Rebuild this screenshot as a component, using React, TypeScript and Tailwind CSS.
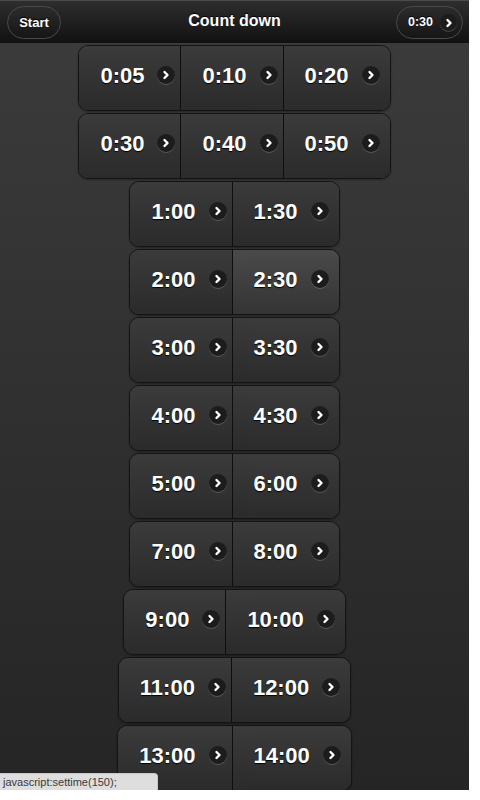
import React from "react";

const rows: string[][] = [
  ["0:05", "0:10", "0:20"],
  ["0:30", "0:40", "0:50"],
  ["1:00", "1:30"],
  ["2:00", "2:30"],
  ["3:00", "3:30"],
  ["4:00", "4:30"],
  ["5:00", "6:00"],
  ["7:00", "8:00"],
  ["9:00", "10:00"],
  ["11:00", "12:00"],
  ["13:00", "14:00"],
];

function Arrow({ size = 18 }: { size?: number }) {
  return (
    <span
      className="flex shrink-0 items-center justify-center rounded-full bg-[#1c1c1c] shadow-[0_1px_0_rgba(255,255,255,0.18)]"
      style={{ width: size, height: size }}
    >
      <svg width="10" height="10" viewBox="0 0 10 10">
        <polyline
          points="3.5,2 6.5,5 3.5,8"
          fill="none"
          stroke="#fff"
          strokeWidth="2.4"
          strokeLinecap="round"
          strokeLinejoin="round"
        />
      </svg>
    </span>
  );
}

export default function App() {
  return (
    <div className="relative h-[800px] w-[480px] overflow-hidden bg-white font-['Liberation_Sans',Arial,sans-serif]">
      <div className="flex h-[790px] w-[469px] flex-col overflow-hidden bg-gradient-to-b from-[#3c3c3c] to-[#252525]">
        {/* Header bar */}
        <div className="relative flex h-[43px] shrink-0 items-center justify-center border-t border-[#4a4a4a] border-b border-b-[#111] bg-gradient-to-b from-[#2e2e2e] to-[#121212]">
          <button className="absolute left-[7px] top-[5px] flex h-[33px] w-[54px] items-center justify-center rounded-full border border-[#4a4a4a] bg-gradient-to-b from-[#2c2c2c] to-[#161616] text-[13px] font-bold text-white [text-shadow:0_-1px_1px_#000]">
            Start
          </button>
          <h1 className="pb-[1px] text-[16px] font-bold text-white [text-shadow:0_-1px_1px_#000]">
            Count down
          </h1>
          <button className="absolute right-[6px] top-[5px] flex h-[33px] w-[67px] items-center gap-[7px] rounded-full border border-[#4a4a4a] bg-gradient-to-b from-[#2c2c2c] to-[#161616] pl-[11px] text-[12.5px] font-bold text-white [text-shadow:0_-1px_1px_#000]">
            0:30
            <Arrow size={17} />
          </button>
        </div>

        {/* Time buttons */}
        <div className="flex flex-col items-center gap-[2px] pt-[2px]">
          {rows.map((row, r) => (
            <div
              key={r}
              className="flex h-[66px] shrink-0 overflow-hidden rounded-[10px] border border-[#141414] shadow-[0_1px_2px_rgba(0,0,0,0.35)]"
            >
              {row.map((t, i) => {
                const last = i === row.length - 1;
                const hot = t === "2:30";
                return (
                  <a
                    key={t}
                    href="#"
                    className={
                      "flex items-center gap-[13px] pb-[6px] pl-[21px] text-[22px] font-bold text-white [text-shadow:0_1px_1px_#000] " +
                      (i > 0 ? "border-l border-[#0e0e0e] " : "") +
                      (last ? "pr-[10px] " : "pr-[5px] ") +
                      (hot
                        ? "bg-gradient-to-b from-[#4a4a4a] to-[#343434]"
                        : "bg-gradient-to-b from-[#3b3b3b] to-[#2b2b2b]")
                    }
                  >
                    <span>{t}</span>
                    <Arrow />
                  </a>
                );
              })}
            </div>
          ))}
        </div>
      </div>

      {/* Browser status overlay */}
      <div className="absolute left-0 top-[773px] flex h-[17px] w-[158px] items-center rounded-tr-[4px] border-t border-r border-[#c8c8c8] bg-[#dedede] pl-[3px] text-[11px] text-[#3a3a3a]">
        javascript:settime(150);
      </div>
    </div>
  );
}
